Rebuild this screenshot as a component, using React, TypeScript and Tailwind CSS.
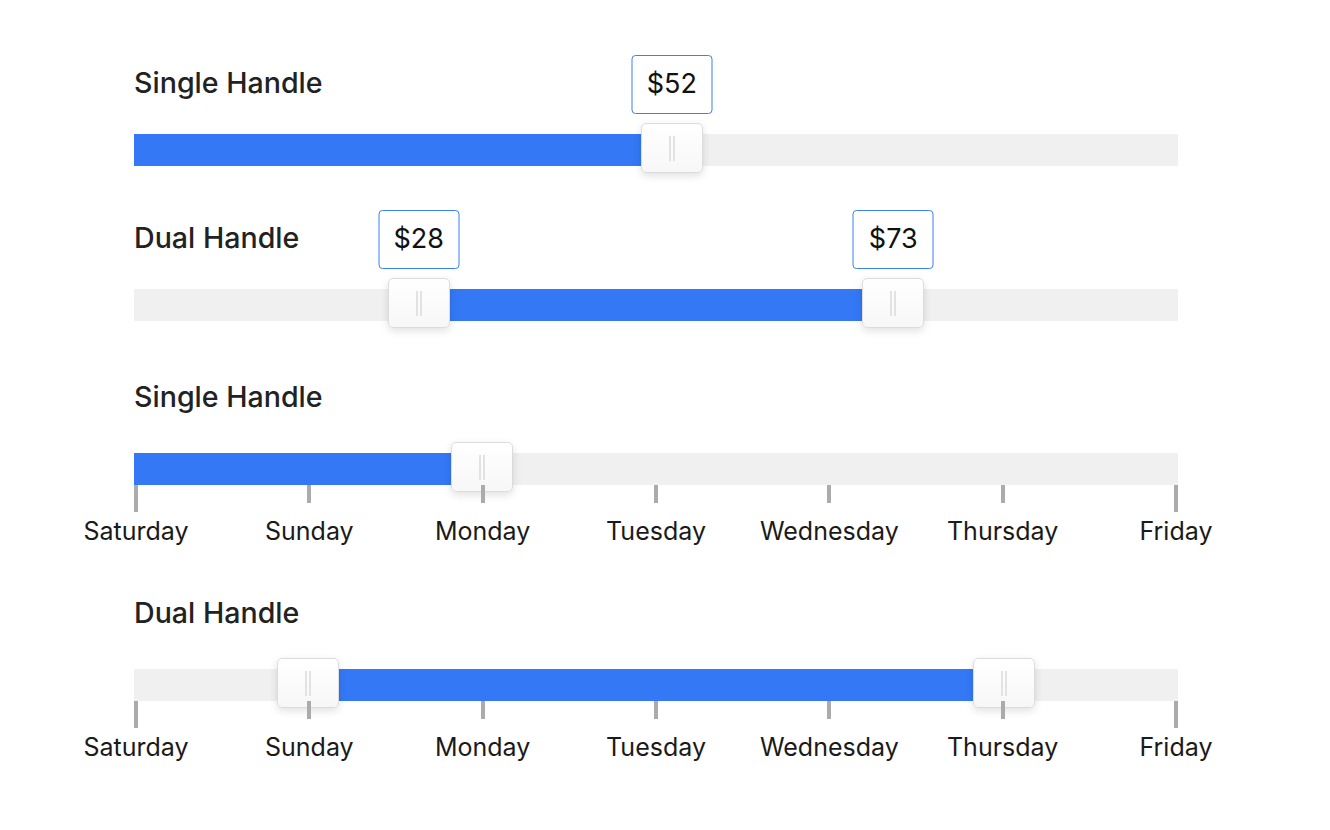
import React from 'react';

const DAYS = ['Saturday', 'Sunday', 'Monday', 'Tuesday', 'Wednesday', 'Thursday', 'Friday'];

function Handle({ pos }: { pos: number }) {
  return (
    <div
      className="absolute top-[-11px] h-[50px] w-[62px] -translate-x-1/2 rounded-[5px] border border-[#dcdcdc] bg-gradient-to-b from-white to-[#f7f7f7] shadow-[0_3px_8px_rgba(0,0,0,0.12)] flex items-center justify-center gap-[2px]"
      style={{ left: `${pos * 100}%` }}
    >
      <span className="block h-[25px] w-[2px] bg-[#e2e2e2]" />
      <span className="block h-[25px] w-[2px] bg-[#e2e2e2]" />
    </div>
  );
}

function Bubble({ pos, text }: { pos: number; text: string }) {
  return (
    <div
      className="absolute bottom-[52px] flex h-[59px] w-[81px] -translate-x-1/2 items-center justify-center rounded-[4px] border border-[#3b7ff5] bg-white text-[27px] text-[#111]"
      style={{ left: `${pos * 100}%` }}
    >
      {text}
    </div>
  );
}

function Track({ from, to, bubbles }: { from: number; to: number; bubbles?: string[] }) {
  const handles = from === 0 ? [to] : [from, to];
  return (
    <div className="relative h-[32px] w-full bg-[#f0f0f0]">
      <div
        className="absolute top-0 h-full bg-[#3478f6]"
        style={{ left: `${from * 100}%`, width: `${(to - from) * 100}%` }}
      />
      {bubbles && handles.map((h, i) => <Bubble key={'b' + i} pos={h} text={bubbles[i]} />)}
      {handles.map((h, i) => (
        <Handle key={i} pos={h} />
      ))}
    </div>
  );
}

function DayScale() {
  return (
    <div className="relative h-[60px] w-full">
      {DAYS.map((d, i) => {
        const end = i === 0 || i === DAYS.length - 1;
        return (
          <div
            key={d}
            className="absolute top-0"
            style={{ left: `calc(${i / 6} * (100% - 4px))` }}
          >
            <div className={`w-[4px] bg-[#ababab] ${end ? 'h-[27px]' : 'h-[18px]'}`} />
            <div className="absolute left-[2px] top-[31px] -translate-x-1/2 whitespace-nowrap text-[25px] leading-[30px] text-[#1a1a1a]">
              {d}
            </div>
          </div>
        );
      })}
    </div>
  );
}

function Title({ children }: { children: React.ReactNode }) {
  return <h2 className="text-[28.6px] font-medium leading-[32px] text-[#222]">{children}</h2>;
}

const money = (v: number) => (v - 1) / 99;

export default function App() {
  return (
    <div
      className="min-h-[830px] w-full bg-white pl-[134px] pt-[67px]"
      style={{ fontFamily: 'Inter, "Noto Sans", sans-serif' }}
    >
      <div className="w-[1044px]">
        <Title>Single Handle</Title>
        <div className="mt-[35px]">
          <Track from={0} to={money(52)} bubbles={['$52']} />
        </div>

        <div className="mt-[56px]">
          <Title>Dual Handle</Title>
        </div>
        <div className="mt-[35px]">
          <Track from={money(28)} to={money(73)} bubbles={['$28', '$73']} />
        </div>

        <div className="mt-[60px]">
          <Title>Single Handle</Title>
        </div>
        <div className="mt-[40px]">
          <Track from={0} to={2 / 6} />
          <DayScale />
        </div>

        <div className="mt-[52px]">
          <Title>Dual Handle</Title>
        </div>
        <div className="mt-[40px]">
          <Track from={1 / 6} to={5 / 6} />
          <DayScale />
        </div>
      </div>
    </div>
  );
}
